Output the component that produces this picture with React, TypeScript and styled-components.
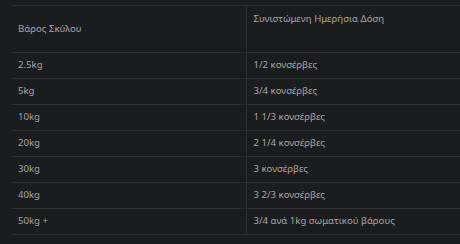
import React from "react";
import styled, { createGlobalStyle } from "styled-components";

const GlobalStyle = createGlobalStyle`
  html, body {
    margin: 0;
    padding: 0;
    background: #1b1c1e;
  }
  body {
    font-family: "Noto Sans", "DejaVu Sans", sans-serif;
  }
`;

const Page = styled.div`
  padding: 5px 0 0 11px;
  width: 460px;
  height: 244px;
  box-sizing: border-box;
  overflow: hidden;
`;

const Table = styled.table`
  width: 449px;
  border-collapse: collapse;
  table-layout: fixed;
  font-size: 9.6px;
  line-height: 1.3;
  color: #a6a6a6;
`;

const HeadCell = styled.th<{ $top?: boolean }>`
  box-sizing: border-box;
  height: 47px;
  padding: ${(p) => (p.$top ? "7px 7px 0" : "0 7px")};
  text-align: left;
  font-weight: 400;
  vertical-align: ${(p) => (p.$top ? "top" : "middle")};
  border-top: 1px solid #2d2e31;
  border-bottom: 1px solid #2d2e31;
  & + & {
    border-left: 1px solid #2d2e31;
  }
`;

const Cell = styled.td`
  height: 25px;
  padding: 0 7px;
  vertical-align: middle;
  border-bottom: 1px solid #2d2e31;
  & + & {
    border-left: 1px solid #2d2e31;
  }
`;

const rows: [string, string][] = [
  ["2.5kg", "1/2 κονσέρβες"],
  ["5kg", "3/4 κονσέρβες"],
  ["10kg", "1 1/3 κονσέρβες"],
  ["20kg", "2 1/4 κονσέρβες"],
  ["30kg", "3 κονσέρβες"],
  ["40kg", "3 2/3 κονσέρβες"],
  ["50kg +", "3/4 ανά 1kg σωματικού βάρους"],
];

export default function App() {
  return (
    <Page>
      <GlobalStyle />
      <Table>
        <colgroup>
          <col style={{ width: 235 }} />
          <col />
        </colgroup>
        <thead>
          <tr>
            <HeadCell>Βάρος Σκύλου</HeadCell>
            <HeadCell $top>Συνιστώμενη Ημερήσια Δόση</HeadCell>
          </tr>
        </thead>
        <tbody>
          {rows.map(([w, d]) => (
            <tr key={w}>
              <Cell>{w}</Cell>
              <Cell>{d}</Cell>
            </tr>
          ))}
        </tbody>
      </Table>
    </Page>
  );
}
